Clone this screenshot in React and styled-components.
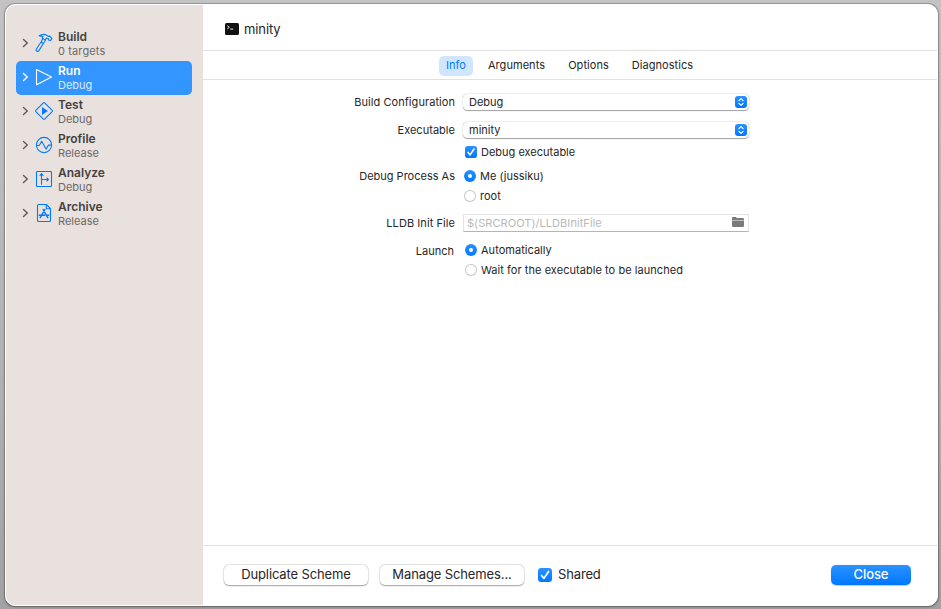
import React from "react";
import styled, { createGlobalStyle } from "styled-components";

const GlobalStyle = createGlobalStyle`
  *, *::before, *::after { box-sizing: border-box; }
  html, body { margin: 0; height: 100%; }
  body { font-family: Inter, "Liberation Sans", sans-serif; color: #262626; overflow: hidden; }
  button { font: inherit; color: inherit; border: 0; padding: 0; background: none; }
  svg { display: block; flex: none; }
`;

const Desktop = styled.div`
  width: 941px;
  height: 609px;
  padding: 4px 3px 3px 5px;
  background: linear-gradient(#c3c3c3, #b2b2b2 60%, #a2a2a2);
`;

const Window = styled.div`
  display: flex;
  height: 602px;
  border: 1px solid #fff;
  border-radius: 10px;
  background: #fff;
  overflow: hidden;
  box-shadow: 0 0 0 1px rgba(0, 0, 0, 0.2), 0 1px 3px rgba(0, 0, 0, 0.25);
`;

const Sidebar = styled.nav`
  flex: none;
  width: 197px;
  padding: 22px 11px 0 10px;
  background: #e9e1de;
  border-radius: 9px 0 0 9px;
`;

const SchemeRow = styled.div`
  display: flex;
  align-items: center;
  height: 34px;
  padding: 0 0 2px 6px;
  border-radius: 5px;
  color: ${(p) => (p.$active ? "#fff" : "#454140")};
  background: ${(p) => (p.$active ? "#3395ff" : "transparent")};
`;

const Disclosure = styled.span`
  color: ${(p) => (p.$active ? "#fff" : "#5f5b59")};
`;

const IconSlot = styled.span`
  display: flex;
  justify-content: center;
  width: 20px;
  margin: 0 4px 0 5px;
  color: ${(p) => (p.$active ? "#fff" : "#007aff")};
`;

const SchemeText = styled.div`
  padding-top: 1px;
`;

const SchemeName = styled.div`
  font-size: 12px;
  line-height: 15px;
  font-weight: 600;
`;

const SchemeInfo = styled.div`
  font-size: 11px;
  line-height: 14px;
  letter-spacing: ${(p) => p.$track || 0}px;
  color: ${(p) => (p.$active ? "#d9ebff" : "#6d6866")};
`;

const Main = styled.main`
  display: flex;
  flex-direction: column;
  flex: 1;
`;

const Header = styled.header`
  display: flex;
  align-items: center;
  gap: 5px;
  height: 46px;
  padding: 3px 0 0 22px;
  border-bottom: 1px solid #e2e2e2;
  font-size: 13px;
  letter-spacing: -0.1px;
`;

const Tabs = styled.div`
  display: flex;
  align-items: flex-start;
  gap: 3px;
  height: 29px;
  padding: 5px 0 0 236px;
  border-bottom: 1px solid #e2e2e2;
`;

const Tab = styled.button`
  width: ${(p) => p.$w}px;
  height: 20px;
  padding-bottom: 2px;
  line-height: 18px;
  border-radius: 5px;
  font-size: 11px;
  white-space: nowrap;
  letter-spacing: 0.06px;
  color: ${(p) => (p.$active ? "#007aff" : "#262626")};
  background: ${(p) => (p.$active ? "#d0e6ff" : "transparent")};
`;

const Form = styled.div`
  flex: 1;
  padding-top: 5px;
`;

const FormRow = styled.div`
  display: grid;
  grid-template-columns: 252px 286px;
  column-gap: 8px;
  align-items: center;
  height: ${(p) => p.$h}px;
  font-size: 11px;
  line-height: 14px;
  white-space: nowrap;
`;

const Label = styled.label`
  text-align: right;
  letter-spacing: ${(p) => p.$track || 0}px;
  padding-right: ${(p) => p.$inset || 0}px;
  margin: ${(p) => p.$drop || 0}px 0 ${(p) => -(p.$drop || 0)}px;
`;

const Text = styled.span`
  letter-spacing: ${(p) => p.$track || 0}px;
`;

const Popup = styled.div`
  display: flex;
  align-items: center;
  justify-content: space-between;
  height: 16px;
  padding: 0 2px 0 6px;
  border-radius: 4.5px;
  background: #fff;
  box-shadow: 0 0 0 0.5px rgba(0, 0, 0, 0.07), 0 0.5px 1px rgba(0, 0, 0, 0.35);
`;

const Choice = styled.div`
  display: flex;
  align-items: center;
  gap: ${(p) => p.$gap || 4}px;
  padding-left: ${(p) => p.$indent}px;
`;

const Radio = styled.span`
  display: flex;
  align-items: center;
  justify-content: center;
  width: 12px;
  height: 12px;
  border-radius: 50%;
  background: ${(p) => (p.$on ? "linear-gradient(#2a91ff, #007aff)" : "#fff")};
  box-shadow: ${(p) => (p.$on ? "none" : "inset 0 0 0 1px #c6c6c6")};

  &::after {
    content: "";
    width: 4px;
    height: 4px;
    border-radius: 50%;
    background: #fff;
  }
`;

const PathField = styled.div`
  display: flex;
  align-items: center;
  justify-content: space-between;
  height: 18px;
  padding: 0 4px 1px 3px;
  border: 1px solid #e3e3e3;
  border-bottom-color: #b5b5b5;
  color: #b9b9b9;
`;

const FolderButton = styled.button`
  padding-bottom: 1px;
`;

const Footer = styled.footer`
  display: flex;
  align-items: center;
  height: 60px;
  padding: 0 26px 2px 21px;
  border-top: 1px solid #e2e2e2;
  font-size: 13px;
  white-space: nowrap;
`;

const PushButton = styled.button`
  width: 144px;
  height: 20px;
  margin-right: 12px;
  padding-bottom: 2px;
  border-radius: 5px;
  line-height: 18px;
  letter-spacing: -0.12px;
  background: #fff;
  box-shadow: 0 0 0 0.5px rgba(0, 0, 0, 0.09), 0 0.5px 1.5px rgba(0, 0, 0, 0.35);
`;

const SharedLabel = styled.span`
  padding-bottom: 2px;
  letter-spacing: -0.15px;
`;

const CloseButton = styled.button`
  width: 80px;
  height: 20px;
  margin-left: auto;
  border-radius: 5px;
  line-height: 19px;
  font-weight: 500;
  letter-spacing: -0.1px;
  color: #fff;
  background: linear-gradient(#2c92ff, #0077ff);
  box-shadow: 0 0.5px 1px rgba(0, 90, 220, 0.3);
`;

const Chevron = () => (
  <svg width="7" height="10" viewBox="0 0 7 10" fill="none" stroke="currentColor" strokeWidth="1.4" strokeLinecap="round" strokeLinejoin="round">
    <path d="M1.5 1.5 5.3 5 1.5 8.5" />
  </svg>
);

const iconProps = { width: 20, height: 20, viewBox: "0 0 20 20", fill: "none", stroke: "currentColor", strokeLinejoin: "round", strokeLinecap: "round" };

const icons = {
  build: (
    <svg {...iconProps} strokeWidth="1.1">
      <path d="M5.2 2.9C7.8 1.1 11 1 13.2 2.6l1.2.9 1.400-.4 2.200 2.600-1.700 1.900-1.700-.7-.3-1.300-1.700-.4-1.700 1.700-2.700-1.800.8-1.400C7.900 3.200 6.500 3 5.200 2.900Z" />
      <path d="M8.800 5.500 7.100 9 2.200 16.200c-.9 1.300 1.600 3 2.600 1.700L9.300 10.500l2.200-3.300M7.100 9l2.200 1.500" />
    </svg>
  ),
  run: (
    <svg {...iconProps} strokeWidth="1.1">
      <path d="M2.500 2.500v15.200L17.500 10.100Z" />
    </svg>
  ),
  test: (
    <svg {...iconProps} strokeWidth="1.1">
      <path d="M9.4 1.8 1.8 9.4a.9.9 0 0 0 0 1.2l7.6 7.6a.9.9 0 0 0 1.2 0l7.6-7.6a.9.9 0 0 0 0-1.2l-7.6-7.6a.9.9 0 0 0-1.2 0Z" />
      <path d="M8 6v8l5.900-4Z" fill="currentColor" stroke="none" />
    </svg>
  ),
  profile: (
    <svg {...iconProps} strokeWidth="1.1">
      <circle cx="10" cy="10" r="7.6" />
      <path d="M2.500 10.500h2.700l2.500-4.300 4.300 7.900 2.500-4h3" />
    </svg>
  ),
  analyze: (
    <svg {...iconProps} strokeWidth="1.1">
      <rect x="2.500" y="2.500" width="15" height="15" rx="0.8" />
      <path d="M7.500 15.200V5M6 6.300l1.500-1.600L9 6.300M7.500 10.500h6.700M12.900 9l1.500 1.500-1.500 1.500" />
    </svg>
  ),
  archive: (
    <svg {...iconProps} strokeWidth="1.1">
      <path d="M4.500 1.500h7.800l4.200 4.200v11.800q0 1-1 1h-11q-1 0-1-1v-15q0-1 1-1Z" />
      <path d="M12.300 1.700v4h4" />
      <path d="M10.800 6.600 6.200 14.700M9.200 6.600l4.600 8.100M5.300 12.200h5.400M12.500 12.200h2.300" strokeWidth="1.4" />
    </svg>
  ),
};

const TerminalIcon = () => (
  <svg width="14" height="12" viewBox="0 0 14 12">
    <rect width="14" height="12" rx="1.6" fill="#111" />
    <path d="m2.300 2.700 2 1.600-2 1.600M5.200 6.100h3" fill="none" stroke="#fff" strokeWidth="0.9" />
  </svg>
);

const Stepper = () => (
  <svg width="12" height="12" viewBox="0 0 12 12">
    <defs>
      <linearGradient id="stepper" x2="0" y2="1">
        <stop stopColor="#2c92ff" />
        <stop offset="1" stopColor="#0077ff" />
      </linearGradient>
    </defs>
    <rect width="12" height="12" rx="3" fill="url(#stepper)" />
    <path d="M3.900 4.600 6 2.600l2.100 2M3.900 7.400 6 9.400l2.100-2" fill="none" stroke="#fff" strokeWidth="1.200" strokeLinecap="round" strokeLinejoin="round" />
  </svg>
);

const Check = ({ size }) => (
  <svg width={size} height={size} viewBox="0 0 12 12">
    <defs>
      <linearGradient id="check" x2="0" y2="1">
        <stop stopColor="#2c92ff" />
        <stop offset="1" stopColor="#0077ff" />
      </linearGradient>
    </defs>
    <rect width="12" height="12" rx="2.800" fill="url(#check)" />
    <path d="M3 6.400 5.100 8.900 9 3" fill="none" stroke="#fff" strokeWidth="1.500" strokeLinecap="round" strokeLinejoin="round" />
  </svg>
);

const Folder = () => (
  <svg width="12" height="10" viewBox="0 0 12 10" fill="#7b7b7b">
    <path d="M0 3V1.200Q0 0 1.200 0h2.600l1 .9h6Q12 .9 12 2v1Z" />
    <path d="M0 3.600h12v5.200q0 1.200-1.200 1.200H1.200Q0 10 0 8.800Z" />
  </svg>
);

const schemes = [
  { id: "build", name: "Build", info: "0 targets", infoTrack: 0.12 },
  { id: "run", name: "Run", info: "Debug", active: true },
  { id: "test", name: "Test", info: "Debug" },
  { id: "profile", name: "Profile", info: "Release" },
  { id: "analyze", name: "Analyze", info: "Debug" },
  { id: "archive", name: "Archive", info: "Release" },
];

export default function App() {
  return (
    <>
      <GlobalStyle />
      <Desktop>
        <Window>
          <Sidebar>
            {schemes.map((s) => (
              <SchemeRow key={s.id} $active={s.active}>
                <Disclosure $active={s.active}><Chevron /></Disclosure>
                <IconSlot $active={s.active}>{icons[s.id]}</IconSlot>
                <SchemeText>
                  <SchemeName>{s.name}</SchemeName>
                  <SchemeInfo $active={s.active} $track={s.infoTrack}>{s.info}</SchemeInfo>
                </SchemeText>
              </SchemeRow>
            ))}
          </Sidebar>
          <Main>
            <Header>
              <TerminalIcon />
              minity
            </Header>
            <Tabs>
              <Tab $w={34} $active>Info</Tab>
              <Tab $w={81}>Arguments</Tab>
              <Tab $w={57}>Options</Tab>
              <Tab $w={85}>Diagnostics</Tab>
            </Tabs>
            <Form>
              <FormRow $h={34}>
                <Label $track={0.06}>Build Configuration</Label>
                <Popup><Text>Debug</Text><Stepper /></Popup>
              </FormRow>
              <FormRow $h={22}>
                <Label $track={0.03}>Executable</Label>
                <Popup><Text>minity</Text><Stepper /></Popup>
              </FormRow>
              <FormRow $h={22}>
                <span />
                <Choice $indent={2}><Check size={12} /><Text>Debug executable</Text></Choice>
              </FormRow>
              <FormRow $h={26}>
                <Label>Debug Process As</Label>
                <Choice $indent={1}><Radio $on /><Text>Me (jussiku)</Text></Choice>
              </FormRow>
              <FormRow $h={14}>
                <span />
                <Choice $indent={1}><Radio /><Text>root</Text></Choice>
              </FormRow>
              <FormRow $h={40}>
                <Label $track={0.07}>LLDB Init File</Label>
                <PathField>
                  <Text $track={0.06}>$(SRCROOT)/LLDBInitFile</Text>
                  <FolderButton><Folder /></FolderButton>
                </PathField>
              </FormRow>
              <FormRow $h={14}>
                <Label $inset={1} $drop={1}>Launch</Label>
                <Choice $indent={2}><Radio $on /><Text $track={0.03}>Automatically</Text></Choice>
              </FormRow>
              <FormRow $h={26}>
                <span />
                <Choice $indent={2}><Radio /><Text $track={0.05}>Wait for the executable to be launched</Text></Choice>
              </FormRow>
            </Form>
            <Footer>
              <PushButton>Duplicate Scheme</PushButton>
              <PushButton>Manage Schemes...</PushButton>
              <Choice $indent={2} $gap={6}><Check size={14} /><SharedLabel>Shared</SharedLabel></Choice>
              <CloseButton>Close</CloseButton>
            </Footer>
          </Main>
        </Window>
      </Desktop>
    </>
  );
}
